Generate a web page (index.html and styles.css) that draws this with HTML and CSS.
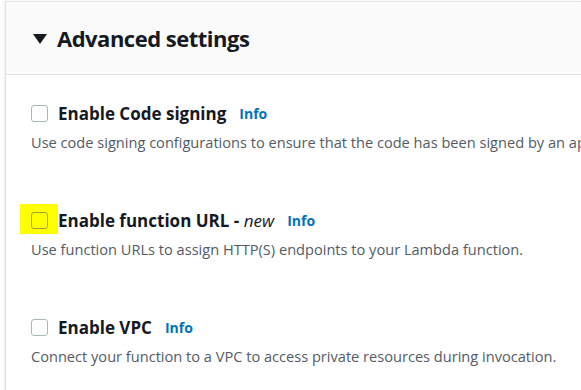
FILE: index.html
```html
<!DOCTYPE html>
<html lang="en">
<head>
  <meta charset="UTF-8">
  <title>Advanced settings</title>
  <link rel="stylesheet" href="styles.css">
</head>
<body>
  <div class="panel">
    <div class="panel-header">
      <span class="caret"></span>
      <h2>Advanced settings</h2>
    </div>

    <div class="panel-body">
      <div class="option">
        <div class="option-title">
          <span class="checkbox"></span>
          <span class="label">Enable Code signing</span>
          <a class="info" href="#">Info</a>
        </div>
        <p class="desc">Use code signing configurations to ensure that the code has been signed by an approved source and has not been altered since signing.</p>
      </div>

      <div class="option">
        <div class="option-title">
          <span class="mark"><span class="checkbox"></span></span>
          <span class="label">Enable function URL - <em>new</em></span>
          <a class="info" href="#">Info</a>
        </div>
        <p class="desc">Use function URLs to assign HTTP(S) endpoints to your Lambda function.</p>
      </div>

      <div class="option">
        <div class="option-title">
          <span class="checkbox"></span>
          <span class="label">Enable VPC</span>
          <a class="info" href="#">Info</a>
        </div>
        <p class="desc">Connect your function to a VPC to access private resources during invocation.</p>
      </div>
    </div>
  </div>
</body>
</html>
```

FILE: styles.css
```css
html, body {
  height: 100%;
}
body {
  margin: 0;
  padding: 1px 0 0 5px;
  box-sizing: border-box;
  font-family: "Open Sans", Arial, sans-serif;
  background: #ffffff;
  overflow: hidden;
}
.panel {
  border-top: 1px solid #e6e6e6;
  border-left: 1px solid #e3e3e3;
  box-shadow: -1px 0 2px rgba(0, 0, 0, 0.08);
  height: 100%;
  overflow: hidden;
}
.panel-header {
  display: flex;
  align-items: center;
  height: 73px;
  padding-left: 27px;
  padding-bottom: 1px;
  box-sizing: border-box;
  background-color: #fafafa;
  border-bottom: 1px solid #e2e2e2;
}
.caret {
  width: 0;
  height: 0;
  border-left: 7px solid transparent;
  border-right: 7px solid transparent;
  border-top: 10px solid #16191f;
  margin: 2px 10px 0 0;
}
h2 {
  margin: 0;
  font-size: 22px;
  letter-spacing: -0.5px;
  font-weight: 700;
  color: #16191f;
}
.panel-body {
  padding: 28px 0 0 25px;
}
.option {
  height: 107px;
}
.option-title {
  display: flex;
  align-items: center;
  height: 20px;
}
.checkbox {
  display: block;
  width: 15px;
  height: 15px;
  border: 1px solid #aab7b8;
  border-radius: 3px;
  background: #ffffff;
  margin-right: 10px;
}
.mark {
  display: block;
  margin: -8px 0 -5px -11px;
  padding: 8px 0 5px 11px;
  background: #ffff00;
}
.mark .checkbox {
  background: transparent;
  border-color: #9aa23a;
}
.label {
  font-size: 17px;
  font-weight: 700;
  color: #16191f;
}
.label em {
  font-weight: 400;
}
.info {
  margin-left: 13px;
  font-size: 14px;
  font-weight: 700;
  color: #0073bb;
  text-decoration: none;
}
.desc {
  margin: 9px 0 0;
  font-size: 14.6px;
  color: #545b64;
  white-space: nowrap;
}
```
